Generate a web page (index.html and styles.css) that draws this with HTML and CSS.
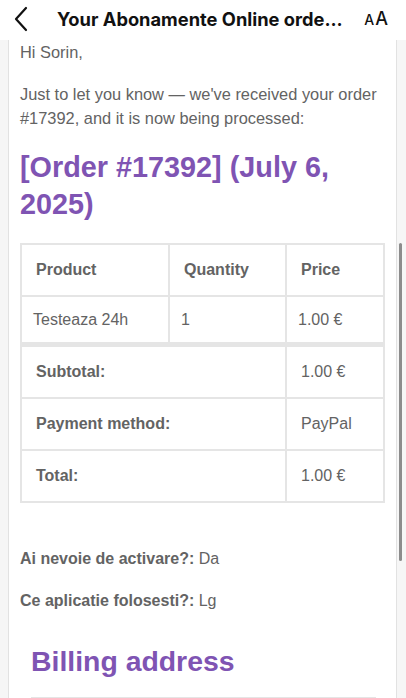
FILE: index.html
```html
<!DOCTYPE html>
<html lang="en">
<head>
    <meta charset="UTF-8">
    <meta name="viewport" content="width=device-width, initial-scale=1.0">
    <title>Your Abonamente Online order has been received!</title>
    <link rel="stylesheet" href="styles.css">
</head>
<body>
    <header class="topbar">
        <svg class="back" width="16" height="26" viewBox="0 0 16 26" aria-hidden="true">
            <path d="M13 2 L3 13 L13 24" fill="none" stroke="#111" stroke-width="2.2" stroke-linecap="round" stroke-linejoin="round"/>
        </svg>
        <div class="title">Your Abonamente Online orde...</div>
        <div class="text-size"><span class="small-a">A</span><span class="big-a">A</span></div>
    </header>

    <div class="page">
        <main class="mail">
            <p class="greeting">Hi Sorin,</p>
            <p class="intro">Just to let you know &mdash; we've received your order #17392, and it is now being processed:</p>

            <h2 class="order-title">[Order #17392] (July 6, 2025)</h2>

            <table class="order-table">
                <thead>
                    <tr>
                        <th class="col-product">Product</th>
                        <th class="col-qty">Quantity</th>
                        <th class="col-price">Price</th>
                    </tr>
                </thead>
                <tbody>
                    <tr>
                        <td>Testeaza 24h</td>
                        <td>1</td>
                        <td>1.00 &euro;</td>
                    </tr>
                </tbody>
                <tfoot>
                    <tr class="first">
                        <th colspan="2">Subtotal:</th>
                        <td>1.00 &euro;</td>
                    </tr>
                    <tr>
                        <th colspan="2">Payment method:</th>
                        <td>PayPal</td>
                    </tr>
                    <tr>
                        <th colspan="2">Total:</th>
                        <td>1.00 &euro;</td>
                    </tr>
                </tfoot>
            </table>

            <p class="meta"><strong>Ai nevoie de activare?:</strong> Da</p>
            <p class="meta"><strong>Ce aplicatie folosesti?:</strong> Lg</p>

            <div class="address">
                <h2 class="address-title">Billing address</h2>
                <div class="address-box"></div>
            </div>
        </main>
    </div>

    <div class="scroll-indicator"></div>
</body>
</html>
```

FILE: styles.css
```css
body {
    margin: 0;
    padding: 0;
    background-color: #f6f6f6;
    font-family: "Liberation Sans", Arial, sans-serif;
    width: 406px;
    height: 698px;
    overflow: hidden;
    position: relative;
}

.topbar {
    display: flex;
    align-items: center;
    height: 40px;
    background-color: #fff;
    padding: 0 0 0 13px;
    box-sizing: border-box;
}

.topbar .back {
    flex: none;
    margin-top: -2px;
}

.title {
    flex: none;
    margin-left: 28px;
    font-family: "Inter", "Liberation Sans", sans-serif;
    font-weight: 700;
    font-size: 18.3px;
    color: #111;
    white-space: nowrap;
    margin-top: -2px;
}

.text-size {
    margin-left: auto;
    margin-right: 18px;
    font-family: "Inter", "Liberation Sans", sans-serif;
    font-weight: 500;
    color: #111;
    display: flex;
    align-items: baseline;
    gap: 1px;
    margin-top: -4px;
}

.small-a {
    font-size: 14px;
}

.big-a {
    font-size: 18px;
}

.page {
    padding: 0 9px 0 8px;
}

.mail {
    background-color: #fff;
    border: 1px solid #e2e2e2;
    border-top: none;
    padding: 0 11px 0 11px;
    color: #636363;
    font-size: 16.4px;
    line-height: 24px;
    height: 700px;
}

.mail p {
    margin: 0;
}

.intro {
    margin-top: 18px !important;
}

.order-title {
    margin: 19px 0 0 0;
    font-size: 28.8px;
    line-height: 37px;
    font-weight: bold;
    color: #7f54b3;
}

.order-table {
    margin-top: 20px;
    width: 365px;
    border-collapse: collapse;
    border: 2px solid #e5e5e5;
    font-size: 16px;
    color: #636363;
}

.order-table th,
.order-table td {
    border: 2px solid #e5e5e5;
    text-align: left;
    vertical-align: middle;
    padding: 0 12px 0 14px;
}

.order-table th {
    font-weight: bold;
    height: 50px;
}

.order-table tbody td {
    height: 45px;
    padding-left: 11px;
}

.order-table tfoot td {
    padding-left: 14px;
}

.order-table tfoot tr.first th,
.order-table tfoot tr.first td {
    border-top-width: 5px;
}

.col-product {
    width: 120px;
}

.col-qty {
    width: 89px;
}

.meta {
    margin-top: 18px !important;
    font-size: 16px;
}

.order-table + .meta {
    margin-top: 44px !important;
}

.address {
    margin-top: 31px;
    padding-left: 11px;
}

.address-title {
    margin: 0;
    font-size: 28.4px;
    line-height: 34px;
    font-weight: bold;
    color: #7f54b3;
}

.address-box {
    margin-top: 19px;
    width: 345px;
    border-top: 2px solid #e5e5e5;
    height: 40px;
}

.scroll-indicator {
    position: absolute;
    left: 399px;
    top: 243px;
    width: 3px;
    height: 318px;
    border-radius: 2px;
    background-color: #8c8c8c;
}
```
